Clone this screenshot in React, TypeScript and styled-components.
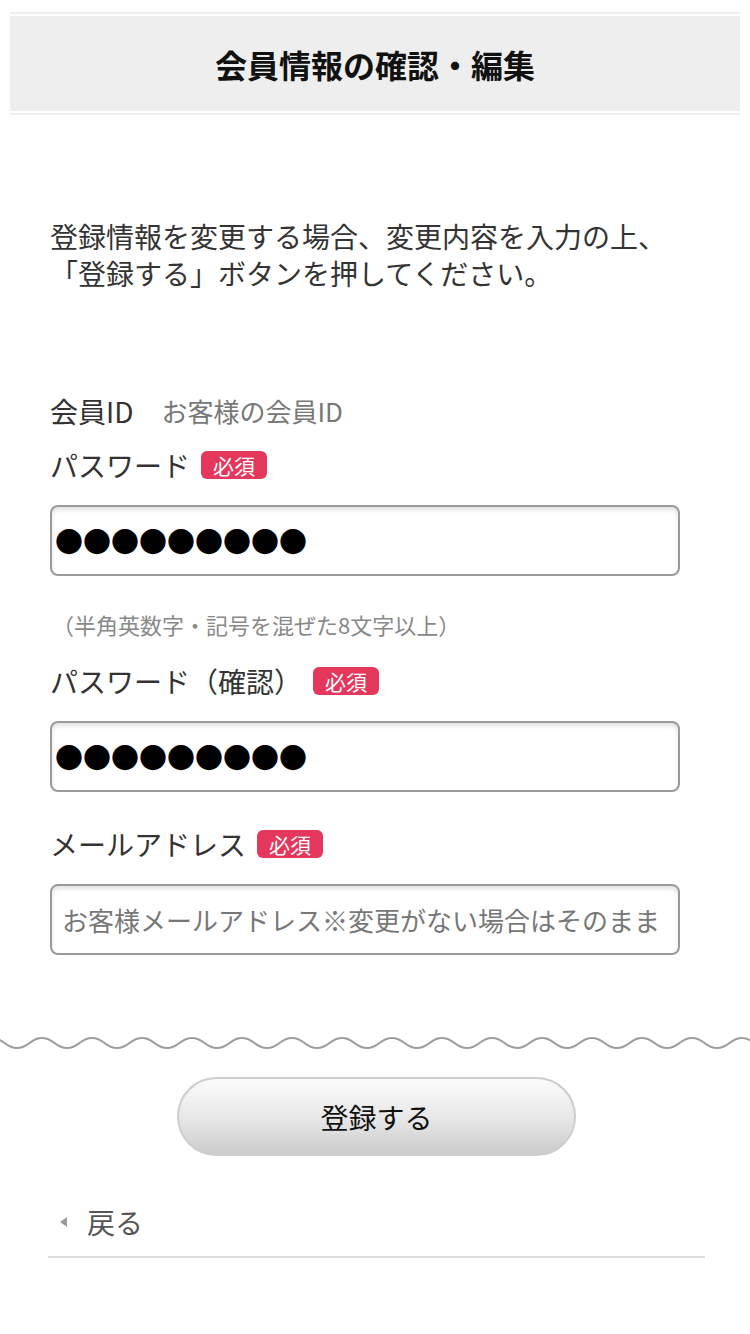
import React from "react";
import styled, { createGlobalStyle } from "styled-components";

const GlobalStyle = createGlobalStyle`
  html, body {
    margin: 0;
    padding: 0;
    background: #fff;
  }
  body {
    font-family: "Noto Sans CJK JP", "Noto Sans", sans-serif;
    color: #333;
  }
`;

const Page = styled.div`
  width: 750px;
  padding-top: 12px;
  padding-bottom: 76px;
`;

// header
const HeaderFrame = styled.header`
  margin: 0 10px;
  border-top: 2px solid #eeeeee;
  border-bottom: 2px solid #eeeeee;
  padding: 2px 0;
`;

const HeaderBar = styled.div`
  height: 95px;
  background: #eeeeee;
  display: flex;
  align-items: center;
  justify-content: center;
`;

const Title = styled.h1`
  margin: 0;
  font-size: 32px;
  font-weight: 700;
  color: #111;
`;

// form
const Content = styled.main`
  padding: 0 70px 0 50px;
`;

const Intro = styled.p`
  margin: 103px 0 0;
  font-size: 28px;
  line-height: 37px;
  color: #333;
  white-space: nowrap;
`;

const LabelRow = styled.div<{ $gap: number }>`
  margin-top: ${(p) => p.$gap}px;
  height: 40px;
  display: flex;
  align-items: center;
  font-size: 28px;
  line-height: 40px;
  color: #333;
  white-space: nowrap;
`;

const StaticValue = styled.span`
  margin-left: 28px;
  font-size: 26px;
  color: #777;
`;

const Required = styled.span`
  margin-left: 11px;
  height: 28px;
  padding: 0 12px;
  border-radius: 6px;
  background: #e5375b;
  color: #fff;
  font-size: 21px;
  line-height: 28px;
  display: inline-flex;
  align-items: center;
`;

const TextBox = styled.input<{ $pad: number }>`
  display: block;
  box-sizing: border-box;
  width: 630px;
  height: 71px;
  margin-top: 20px;
  padding: 0 10px 0 ${(p) => p.$pad}px;
  border: 2px solid #9a9a9a;
  border-radius: 8px;
  background: #fff;
  box-shadow: inset 0 3px 4px rgba(0, 0, 0, 0.12);
  font-family: "Noto Sans CJK JP", sans-serif;
  font-size: 26px;
  color: #000;
  outline: none;

  &::placeholder {
    color: #777;
  }
`;

const DotBox = styled(TextBox)`
  font-size: 28px;
`;

const Hint = styled.p`
  margin: 33px 0 0 2px;
  font-size: 22px;
  line-height: 30px;
  color: #888;
  white-space: nowrap;
`;

// footer area
const WaveWrap = styled.div`
  margin-top: 81px;
  height: 14px;
  line-height: 0;
`;

const ButtonRow = styled.div`
  margin-top: 27px;
  display: flex;
  justify-content: center;
  padding-left: 3px;
`;

const SubmitButton = styled.button`
  width: 399px;
  height: 79px;
  border: 2px solid #cdcdcd;
  border-radius: 40px;
  background: linear-gradient(#fbfbfb, #e6e6e6 55%, #cbcbcb);
  font-family: "Noto Sans CJK JP", sans-serif;
  font-size: 28px;
  color: #111;
  cursor: pointer;
`;

const BackRow = styled.div`
  margin: 40px 45px 0 48px;
  padding: 0 0 8px 12px;
  height: 52px;
  border-bottom: 2px solid #dddddd;
  display: flex;
  align-items: center;
  gap: 20px;
`;

const BackArrow = styled.span`
  width: 0;
  height: 0;
  border-top: 5px solid transparent;
  border-bottom: 5px solid transparent;
  border-right: 7px solid #9a9a9a;
`;

const BackLink = styled.a`
  font-size: 28px;
  line-height: 52px;
  color: #555;
  text-decoration: none;
`;

const Wave: React.FC = () => {
  const parts: string[] = ["M-8,2"];
  for (let x = -8; x < 760; x += 50) {
    parts.push(`C${x + 12.5},2 ${x + 12.5},12 ${x + 25},12`);
    parts.push(`C${x + 37.5},12 ${x + 37.5},2 ${x + 50},2`);
  }
  return (
    <svg width="750" height="14" viewBox="0 0 750 14">
      <path d={parts.join(" ")} fill="none" stroke="#9c9c9c" strokeWidth="2" />
    </svg>
  );
};

const App: React.FC = () => {
  return (
    <>
      <GlobalStyle />
      <Page>
        <HeaderFrame>
          <HeaderBar>
            <Title>会員情報の確認・編集</Title>
          </HeaderBar>
        </HeaderFrame>

        <Content>
          <Intro>
            登録情報を変更する場合、変更内容を入力の上、
            <br />
            「登録する」ボタンを押してください。
          </Intro>

          <LabelRow $gap={99}>
            会員ID
            <StaticValue>お客様の会員ID</StaticValue>
          </LabelRow>

          <LabelRow $gap={14}>
            パスワード
            <Required>必須</Required>
          </LabelRow>
          <DotBox $pad={3} type="text" readOnly value="●●●●●●●●●" />
          <Hint>（半角英数字・記号を混ぜた8文字以上）</Hint>

          <LabelRow $gap={22}>
            パスワード（確認）
            <Required>必須</Required>
          </LabelRow>
          <DotBox $pad={3} type="text" readOnly value="●●●●●●●●●" />

          <LabelRow $gap={32}>
            メールアドレス
            <Required>必須</Required>
          </LabelRow>
          <TextBox
            $pad={10}
            type="email"
            placeholder="お客様メールアドレス※変更がない場合はそのまま"
          />
        </Content>

        <WaveWrap>
          <Wave />
        </WaveWrap>

        <ButtonRow>
          <SubmitButton type="button">登録する</SubmitButton>
        </ButtonRow>

        <BackRow>
          <BackArrow />
          <BackLink href="#">戻る</BackLink>
        </BackRow>
      </Page>
    </>
  );
};

export default App;
